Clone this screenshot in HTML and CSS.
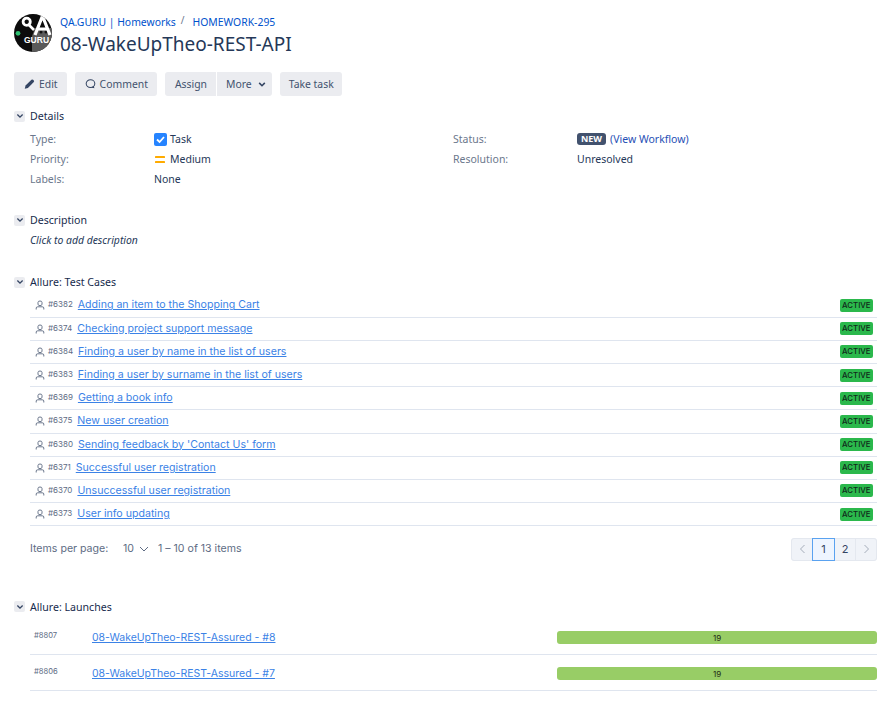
FILE: index.html
```html
<!DOCTYPE html>
<html lang="en">
<head>
<meta charset="utf-8">
<title>08-WakeUpTheo-REST-API</title>
<link rel="stylesheet" href="styles.css">
</head>
<body>
<header class="head">
  <svg class="avatar" viewBox="0 0 38 38" width="38" height="38">
    <defs><clipPath id="c"><circle cx="19" cy="19" r="19"/></clipPath></defs>
    <g clip-path="url(#c)">
      <rect width="38" height="38" fill="#0c0c0c"/>
      <path d="M18 38 V22 L21 14 H38 V38 Z" fill="#5a5a5a"/>
      <circle cx="27" cy="18" r="1.5" fill="#111"/><circle cx="32" cy="18" r="1.5" fill="#111"/>
      <circle cx="12.7" cy="7.7" r="3.6" fill="none" stroke="#fff" stroke-width="2.8"/>
      <path d="M14 10 L20 16" stroke="#fff" stroke-width="2.6"/>
      <path d="M21 21 L28.5 2 L36 21 M24 15 H33" fill="none" stroke="#fff" stroke-width="3.2"/>
      <circle cx="4" cy="19.3" r="2.4" fill="#2fbf71"/>
      <text x="10" y="29" class="avatar-text">GURU</text>
    </g>
  </svg>
  <div class="head-text">
    <nav class="crumbs"><a>QA.GURU | Homeworks</a><span class="sep">/</span><a>HOMEWORK-295</a></nav>
    <h1>08-WakeUpTheo-REST-API</h1>
  </div>
</header>

<div class="toolbar">
  <button class="btn"><svg width="11" height="12" viewBox="0 0 14 14"><path d="M1 13 L2 9 L9.5 1.5 Q10.5 .8 11.5 1.5 L12.5 2.5 Q13.2 3.5 12.5 4.5 L5 12 Z" fill="#344563"/></svg>Edit</button>
  <button class="btn"><svg width="11" height="12" viewBox="0 0 14 14"><ellipse cx="7" cy="6.5" rx="5.5" ry="5" fill="none" stroke="#344563" stroke-width="1.3"/><path d="M8 11.5 L12 12.5 L11 9.5" fill="#344563"/></svg>Comment</button>
  <div class="group">
    <button class="btn">Assign</button>
    <button class="btn">More<svg width="8" height="7" viewBox="0 0 10 8"><path d="M1.5 2 L5 5.5 L8.5 2" fill="none" stroke="#344563" stroke-width="2"/></svg></button>
  </div>
  <button class="btn btn-take">Take task</button>
</div>

<section class="module details-mod">
  <h2 class="mod-title"><span class="toggle"><svg width="10" height="8" viewBox="0 0 10 8"><path d="M1.5 2 L5 5.5 L8.5 2" fill="none" stroke="#344563" stroke-width="1.8"/></svg></span>Details</h2>
  <div class="details">
    <dl class="col col-left">
      <div class="row"><dt>Type:</dt><dd><svg class="ic" width="13" height="13" viewBox="0 0 13 13"><rect width="13" height="13" rx="2" fill="#2684ff"/><path d="M3 6.5 L5.6 9 L10 4" fill="none" stroke="#fff" stroke-width="1.8"/></svg>Task</dd></div>
      <div class="row"><dt>Priority:</dt><dd><svg class="ic" width="13" height="13" viewBox="0 0 13 13"><rect x="1" y="3" width="10" height="2" rx=".6" fill="#ffab00"/><rect x="1" y="8" width="10" height="2" rx=".6" fill="#ffab00"/></svg>Medium</dd></div>
      <div class="row"><dt>Labels:</dt><dd>None</dd></div>
    </dl>
    <dl class="col col-right">
      <div class="row"><dt>Status:</dt><dd><span class="lozenge">NEW</span> <a>(View Workflow)</a></dd></div>
      <div class="row"><dt>Resolution:</dt><dd>Unresolved</dd></div>
    </dl>
  </div>
</section>

<section class="module desc-mod">
  <h2 class="mod-title"><span class="toggle"><svg width="10" height="8" viewBox="0 0 10 8"><path d="M1.5 2 L5 5.5 L8.5 2" fill="none" stroke="#344563" stroke-width="1.8"/></svg></span>Description</h2>
  <p class="desc">Click to add description</p>
</section>

<section class="module cases-mod">
  <h2 class="mod-title"><span class="toggle"><svg width="10" height="8" viewBox="0 0 10 8"><path d="M1.5 2 L5 5.5 L8.5 2" fill="none" stroke="#344563" stroke-width="1.8"/></svg></span>Allure: Test Cases</h2>
  <ul class="cases">
    <li class="case"><svg class="user" viewBox="0 0 10 10" width="10" height="10"><use href="#u"/></svg><span class="id">#6382</span><a>Adding an item to the Shopping Cart</a><span class="active">ACTIVE</span></li>
    <li class="case"><svg class="user" viewBox="0 0 10 10" width="10" height="10"><use href="#u"/></svg><span class="id">#6374</span><a>Checking project support message</a><span class="active">ACTIVE</span></li>
    <li class="case"><svg class="user" viewBox="0 0 10 10" width="10" height="10"><use href="#u"/></svg><span class="id">#6384</span><a>Finding a user by name in the list of users</a><span class="active">ACTIVE</span></li>
    <li class="case"><svg class="user" viewBox="0 0 10 10" width="10" height="10"><use href="#u"/></svg><span class="id">#6383</span><a>Finding a user by surname in the list of users</a><span class="active">ACTIVE</span></li>
    <li class="case"><svg class="user" viewBox="0 0 10 10" width="10" height="10"><use href="#u"/></svg><span class="id">#6369</span><a>Getting a book info</a><span class="active">ACTIVE</span></li>
    <li class="case"><svg class="user" viewBox="0 0 10 10" width="10" height="10"><use href="#u"/></svg><span class="id">#6375</span><a>New user creation</a><span class="active">ACTIVE</span></li>
    <li class="case"><svg class="user" viewBox="0 0 10 10" width="10" height="10"><use href="#u"/></svg><span class="id">#6380</span><a>Sending feedback by 'Contact Us' form</a><span class="active">ACTIVE</span></li>
    <li class="case"><svg class="user" viewBox="0 0 10 10" width="10" height="10"><use href="#u"/></svg><span class="id">#6371</span><a>Successful user registration</a><span class="active">ACTIVE</span></li>
    <li class="case"><svg class="user" viewBox="0 0 10 10" width="10" height="10"><use href="#u"/></svg><span class="id">#6370</span><a>Unsuccessful user registration</a><span class="active">ACTIVE</span></li>
    <li class="case"><svg class="user" viewBox="0 0 10 10" width="10" height="10"><use href="#u"/></svg><span class="id">#6373</span><a>User info updating</a><span class="active">ACTIVE</span></li>
  </ul>
  <div class="pager-row">
    <span class="ipp">Items per page:</span>
    <span class="size">10<svg width="10" height="6" viewBox="0 0 10 6"><path d="M1 1 L5 5 L9 1" fill="none" stroke="#5e6c84" stroke-width="1"/></svg></span>
    <span class="range">1 – 10 of 13 items</span>
    <div class="pager">
      <span class="pg arrow"><svg width="7" height="10" viewBox="0 0 7 10"><path d="M5.5 1 L1.5 5 L5.5 9" fill="none" stroke="#a5adba" stroke-width="1"/></svg></span>
      <span class="pg current">1</span>
      <span class="pg">2</span>
      <span class="pg arrow"><svg width="7" height="10" viewBox="0 0 7 10"><path d="M1.5 1 L5.5 5 L1.5 9" fill="none" stroke="#a5adba" stroke-width="1"/></svg></span>
    </div>
  </div>
</section>

<section class="module launches-mod">
  <h2 class="mod-title"><span class="toggle"><svg width="10" height="8" viewBox="0 0 10 8"><path d="M1.5 2 L5 5.5 L8.5 2" fill="none" stroke="#344563" stroke-width="1.8"/></svg></span>Allure: Launches</h2>
  <ul class="launches">
    <li class="launch"><span class="lid">#8807</span><a>08-WakeUpTheo-REST-Assured - #8</a><span class="bar">19</span></li>
    <li class="launch"><span class="lid">#8806</span><a>08-WakeUpTheo-REST-Assured - #7</a><span class="bar">19</span></li>
  </ul>
</section>

<svg class="defs" width="0" height="0"><symbol id="u" viewBox="0 0 10 10"><path d="M3 2.4 Q3 1 5 1 Q7 1 7 2.4 V4.2 Q7 5.6 5 5.6 Q3 5.6 3 4.2 Z" fill="none" stroke="#6b778c" stroke-width="1"/><path d="M1.2 9.5 V8 Q1.2 6.8 2.8 6.8 H7.2 Q8.8 6.8 8.8 8 V9.5" fill="none" stroke="#6b778c" stroke-width="1"/></symbol></svg>
</body>
</html>
```
FILE: styles.css
```css
* { box-sizing: border-box; }
html, body { margin: 0; padding: 0; }
body {
  font-family: "Noto Sans", sans-serif;
  font-size: 10.5px;
  line-height: 20px;
  color: #253858;
  background: #fff;
  padding: 14px 14px 0;
  height: 701px;
  overflow: hidden;
}
a { color: #0052cc; }
ul, dl, dd, dt, p, h1, h2 { margin: 0; padding: 0; list-style: none; }

.head { display: flex; gap: 8px; height: 38px; }
.avatar { flex: none; }
.avatar-text { font: 700 8.5px "Liberation Sans", sans-serif; fill: #fff; }
.crumbs { display: flex; align-items: center; height: 16px; font-size: 10.4px; line-height: 16px; color: #6b778c; }
.crumbs .sep { margin: -4px 8px 0 5px; font-size: 10px; }
h1 { font-size: 19px; font-weight: 400; line-height: 28px; color: #253858; white-space: nowrap; }

.toolbar { display: flex; gap: 8px; margin-top: 20px; height: 24px; }
.group { display: flex; gap: 1px; }
.btn {
  display: inline-flex; align-items: center; gap: 4px;
  height: 24px; padding: 0 9px 0 10px;
  border: 0; border-radius: 3px;
  background: #ebecf0; color: #42526e;
  font: 10.4px/20px "Noto Sans", sans-serif;
}
.group .btn:first-child { border-radius: 3px 0 0 3px; }
.group .btn:last-child { border-radius: 0 3px 3px 0; gap: 6px; padding-left: 9px; padding-right: 6px; }
.btn.btn-take { padding: 0 8px 0 9px; }

.mod-title { display: flex; align-items: center; gap: 5px; font-size: 10.6px; font-weight: 400; line-height: 20px; height: 20px; color: #172b4d; }
.toggle { width: 11px; height: 11px; background: #ebecf0; border-radius: 2px; display: flex; align-items: center; justify-content: center; }
.toggle svg { width: 8px; height: 6px; }

.details-mod { margin-top: 10px; }
.details { display: flex; padding: 3px 0 0 16px; }
.col { flex: none; }
.col-left { width: 423px; }
.row { display: flex; height: 20px; }
dt { width: 124px; color: #6b778c; }
dd { display: flex; align-items: center; gap: 3px; }
.ic { flex: none; }
.lozenge { background: #42526e; color: #fff; font-size: 9px; font-weight: 700; line-height: 11px; height: 12px; padding: 0 4px; border-radius: 3px; margin-top: -1px; }
dd a { color: #1f4fb5; margin-left: 1px; }

.desc-mod { margin-top: 21px; }
.desc { padding-left: 16px; font-style: italic; font-size: 10.4px; }

.cases-mod { margin-top: 22px; }
.cases { padding-left: 16px; margin-top: 2.4px; }
.case {
  display: flex; align-items: center; height: 23.2px;
  border-bottom: 1px solid #dfe5ef;
  padding: 0 4px 0 5px;
  font-family: Inter, sans-serif;
}
.user { flex: none; margin-right: 3px; }
.id { font-size: 8px; color: #5e6c84; margin-right: 5px; line-height: 16px; margin-top: -2px; }
.case a, .launch a { color: #3b82e6; text-decoration: underline; font-size: 10.6px; line-height: 16px; }
.active {
  margin-left: auto; background: #2bb84c; color: #10291a;
  font-size: 7.8px; line-height: 13px; height: 13px; padding: 0 2.5px; border-radius: 2px; font-weight: 500;
}

.pager-row { display: flex; align-items: center; padding-left: 16px; margin-top: 11.6px; height: 23px; font-family: Inter, sans-serif; font-size: 10.6px; color: #5e6c84; }
.ipp { width: 93px; }
.size { display: flex; align-items: center; gap: 5px; width: 35px; color: #5e6c84; }
.pager { margin-left: auto; display: flex; background: #f0f3f8; border-radius: 3px; }
.pg { width: 22px; height: 23px; display: flex; align-items: center; justify-content: center; color: #344563; font-size: 11px; border: 1px solid #e4e8ef; margin-left: -1px; }
.pg.current { border-color: #5aa2f0; background: #eef5ff; z-index: 1; width: 23px; }
.pg.arrow:first-child { margin-left: 0; border-radius: 3px 0 0 3px; }
.pg.arrow:last-child { border-radius: 0 3px 3px 0; }

.launches-mod { margin-top: 36px; }
.launches { padding-left: 16px; margin-top: 2.5px; }
.launch { display: flex; align-items: center; height: 36px; padding-top: 3px; border-bottom: 1px solid #dfe5ef; font-family: Inter, sans-serif; }
.lid { width: 62px; padding-left: 4px; font-size: 7.6px; color: #5e6c84; margin-top: -4px; }
.launch a { font-size: 10.5px; }
.bar { width: 320px; margin-left: auto; margin-top: -2px; height: 13px; background: #98cd66; border-radius: 3px; font-size: 8px; line-height: 14px; text-align: center; color: #1d2a14; }
.defs { position: absolute; }
```
